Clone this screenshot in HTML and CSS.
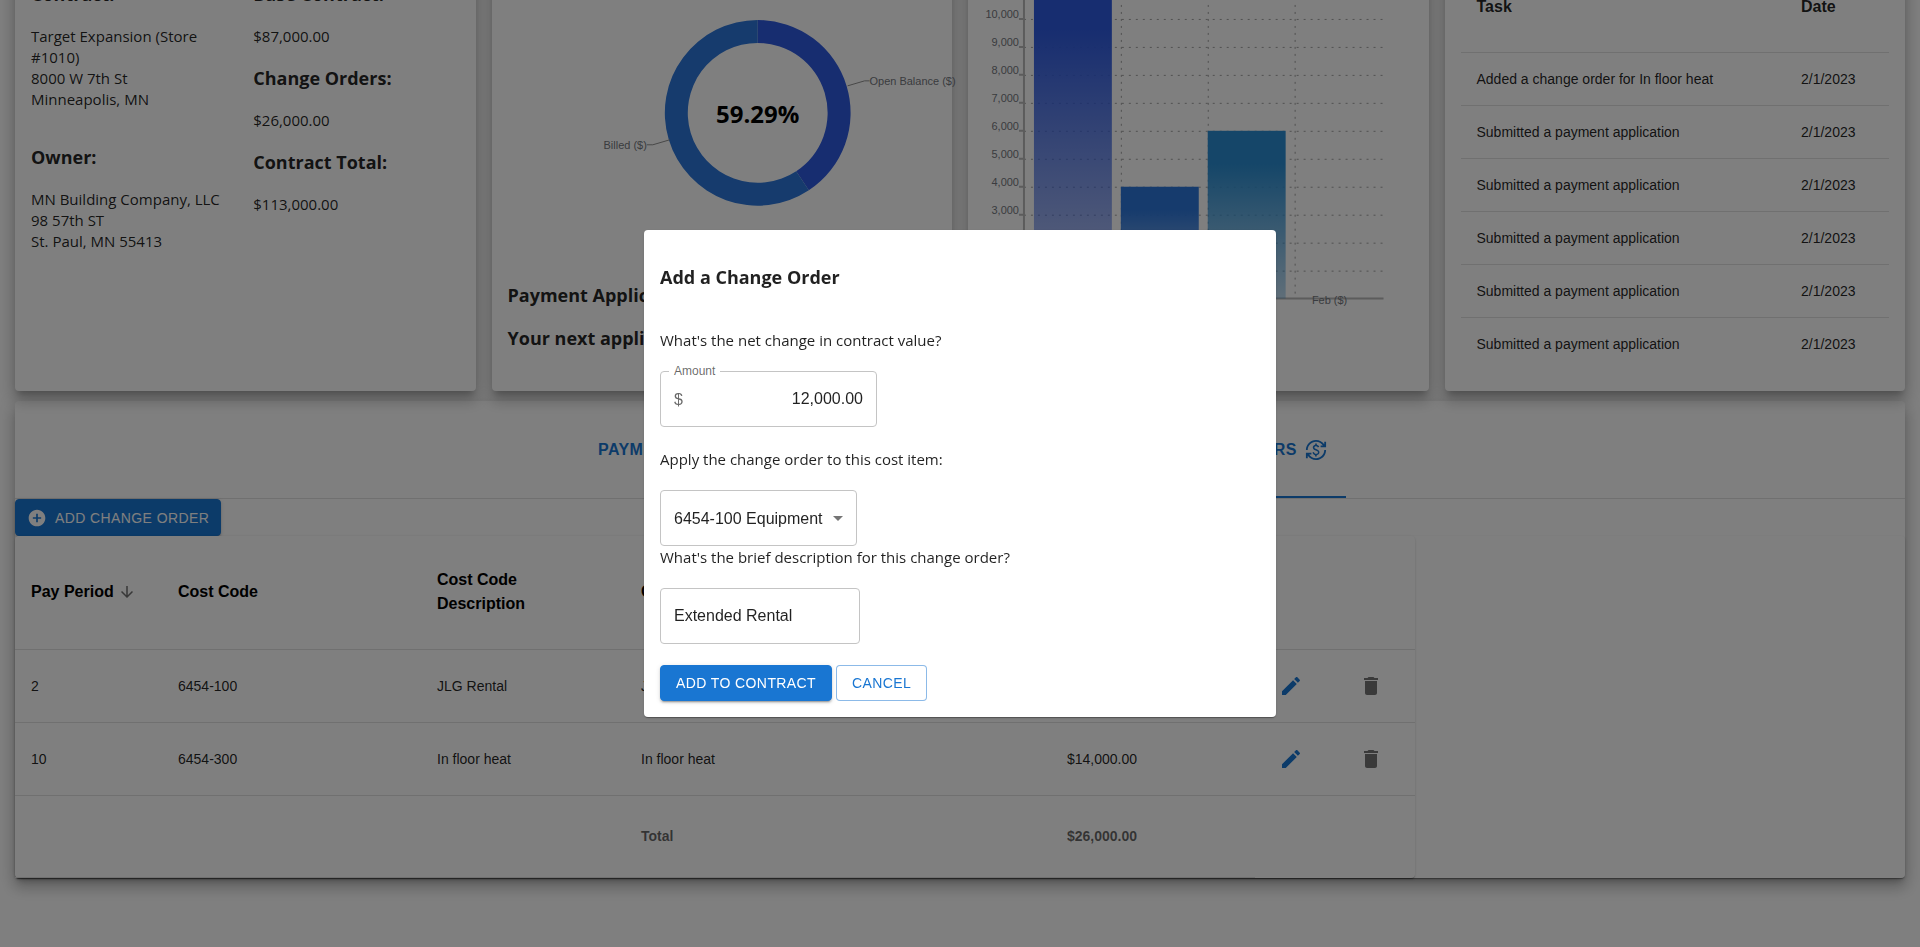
FILE: index.html
```html
<!DOCTYPE html>
<html lang="en">
<head>
<meta charset="utf-8">
<title>Contract Dashboard</title>
<link rel="stylesheet" href="styles.css">
</head>
<body>
<div class="viewport">
<main class="page">
  <section class="cards">
    <article class="card contract">
      <div class="contract-col">
        <h3>Contract:</h3>
        <p>Target Expansion (Store #1010)<br>8000 W 7th St<br>Minneapolis, MN</p>
        <h3 class="owner">Owner:</h3>
        <p>MN Building Company, LLC<br>98 57th ST<br>St. Paul, MN 55413</p>
      </div>
      <div class="contract-col">
        <h3>Base Contract:</h3>
        <p>$87,000.00</p>
        <h3>Change Orders:</h3>
        <p>$26,000.00</p>
        <h3>Contract Total:</h3>
        <p>$113,000.00</p>
      </div>
    </article>

    <article class="card billing">
      <svg class="chart" viewBox="0 0 429 303" role="img" aria-label="Billed share of contract">
        <path class="slice-open" d="M250 58A93 93 0 0 1 301.200 228.640L288.530 209.440A70 70 0 0 0 250 81Z"/>
        <path class="slice-billed" d="M301.200 228.640A93 93 0 1 1 250 58V81A70 70 0 1 0 288.530 209.440Z"/>
        <polyline class="leader" points="340,124 357,119 362,119"/>
        <polyline class="leader" points="162,178 145,183 139,183"/>
        <text class="chart-label" x="362" y="123">Open Balance ($)</text>
        <text class="chart-label end" x="139" y="187">Billed ($)</text>
        <text class="percent" x="250" y="161">59.29%</text>
      </svg>
      <h3>Payment Applications: 3</h3>
      <h3>Your next application is due soon</h3>
    </article>

    <article class="card">
      <svg class="chart" viewBox="0 0 429 370" role="img" aria-label="Billing by month">
        <defs>
          <linearGradient id="g1" x1="0" y1="0" x2="0" y2="1"><stop offset=".2" stop-color="#2f5be0"/><stop offset="1" stop-color="#2f5be0" stop-opacity=".3"/></linearGradient>
          <linearGradient id="g2" x1="0" y1="0" x2="0" y2="1"><stop offset=".2" stop-color="#2c76da"/><stop offset="1" stop-color="#2c76da" stop-opacity=".3"/></linearGradient>
          <linearGradient id="g3" x1="0" y1="0" x2="0" y2="1"><stop offset=".2" stop-color="#2b8dd2"/><stop offset="1" stop-color="#2b8dd2" stop-opacity=".3"/></linearGradient>
        </defs>
        <path class="grid" d="M40 57.500H400M40 85.500H400M40 113.500H400M40 141.500H400M40 169.500H400M40 197.500H400M40 225.500H400M40 253.500H400M40 281.500H400M40 309.500H400M137.500 1V333M224.500 1V333M311.500 1V333"/>
        <path class="axis" d="M40 0V337M39 337H400M35 57H40M35 85H40M35 113H40M35 141H40M35 169H40M35 197H40M35 225H40M35 253H40M35 281H40M35 309H40"/>
        <rect x="50" y="1" width="78" height="336" fill="url(#g1)"/>
        <rect x="137" y="225" width="78" height="112" fill="url(#g2)"/>
        <rect x="224" y="169" width="78" height="168" fill="url(#g3)"/>
        <g class="chart-label end">
          <text x="35" y="56">10,000</text><text x="35" y="84">9,000</text><text x="35" y="112">8,000</text>
          <text x="35" y="140">7,000</text><text x="35" y="168">6,000</text><text x="35" y="196">5,000</text>
          <text x="35" y="224">4,000</text><text x="35" y="252">3,000</text><text x="35" y="280">2,000</text>
          <text x="35" y="308">1,000</text>
        </g>
        <text class="chart-label middle" x="346" y="342">Feb ($)</text>
      </svg>
    </article>

    <article class="card">
      <table class="tasks">
        <thead><tr><th>Task</th><th class="date">Date</th></tr></thead>
        <tbody>
          <tr><td>Added a change order for In floor heat</td><td>2/1/2023</td></tr>
          <tr><td>Submitted a payment application</td><td>2/1/2023</td></tr>
          <tr><td>Submitted a payment application</td><td>2/1/2023</td></tr>
          <tr><td>Submitted a payment application</td><td>2/1/2023</td></tr>
          <tr><td>Submitted a payment application</td><td>2/1/2023</td></tr>
          <tr><td>Submitted a payment application</td><td>2/1/2023</td></tr>
        </tbody>
      </table>
    </article>
  </section>

  <section class="panel">
    <div class="tabs" role="tablist">
      <button class="tab" role="tab" type="button">Payment Applications</button>
      <button class="tab selected" role="tab" type="button" aria-selected="true">Change Orders
        <svg class="icon" viewBox="0 0 24 24"><path d="M12.89 11.1c-1.78-.59-2.64-.96-2.64-1.9 0-1.02 1.11-1.39 1.81-1.39 1.31 0 1.79.99 1.9 1.34l1.58-.67c-.15-.44-.82-1.91-2.66-2.23V5h-1.75v1.26c-2.6.56-2.62 2.85-2.62 2.96 0 2.27 2.25 2.91 3.35 3.31 1.58.56 2.28 1.07 2.28 2.03 0 1.13-1.05 1.61-1.98 1.61-1.82 0-2.34-1.87-2.4-2.09l-1.66.67c.63 2.19 2.28 2.78 2.9 2.96V19h1.75v-1.24c.52-.09 3.02-.59 3.02-3.22.01-1.39-.6-2.61-3-3.44zM3 21H1v-6h6v2H4.520c1.610 2.410 4.360 4 7.480 4 4.970 0 9-4.030 9-9h2c0 6.080-4.920 11-11 11-3.720 0-7.010-1.850-9-4.670V21zM1 12C1 5.920 5.920 1 12 1c3.720 0 7.010 1.850 9 4.670V3h2v6h-6V7h2.480C17.870 4.590 15.120 3 12 3c-4.970 0-9 4.030-9 9H1z"/></svg>
      </button>
    </div>
    <button class="btn contained add" type="button">
      <svg class="icon" viewBox="0 0 24 24"><path d="M12 2C6.48 2 2 6.48 2 12s4.480 10 10 10 10-4.480 10-10S17.520 2 12 2zm5 11h-4v4h-2v-4H7v-2h4V7h2v4h4v2z"/></svg>
      Add Change Order
    </button>
    <div class="table-area">
      <div class="table-paper">
        <table class="orders">
          <colgroup><col class="c-period"><col class="c-code"><col class="c-desc"><col class="c-order"><col class="c-desc"><col class="c-icon"><col class="c-icon"></colgroup>
          <thead>
            <tr>
              <th><button class="sort" type="button">Pay Period <svg class="icon" viewBox="0 0 24 24"><path d="M20 12l-1.410-1.410L13 16.170V4h-2v12.170l-5.580-5.590L4 12l8 8 8-8z"/></svg></button></th>
              <th>Cost Code</th><th>Cost Code<br>Description</th><th>Change Order Description</th><th>Amount</th><th></th><th></th>
            </tr>
          </thead>
          <tbody>
            <tr>
              <td>2</td><td>6454-100</td><td>JLG Rental</td><td>JLG Rental</td><td>$12,000.00</td>
              <td><button class="icon-btn edit" type="button" aria-label="Edit"><svg class="icon" viewBox="0 0 24 24"><path d="M3 17.250V21h3.750L17.810 9.940l-3.750-3.750L3 17.250zM20.710 7.040c.39-.39.39-1.020 0-1.410l-2.340-2.340c-.39-.39-1.020-.39-1.410 0l-1.830 1.830 3.750 3.750 1.830-1.830z"/></svg></button></td>
              <td><button class="icon-btn" type="button" aria-label="Delete"><svg class="icon" viewBox="0 0 24 24"><path d="M6 19c0 1.100.9 2 2 2h8c1.100 0 2-.9 2-2V7H6v12zM19 4h-3.500l-1-1h-5l-1 1H5v2h14V4z"/></svg></button></td>
            </tr>
            <tr>
              <td>10</td><td>6454-300</td><td>In floor heat</td><td>In floor heat</td><td>$14,000.00</td>
              <td><button class="icon-btn edit" type="button" aria-label="Edit"><svg class="icon" viewBox="0 0 24 24"><path d="M3 17.250V21h3.750L17.810 9.940l-3.750-3.750L3 17.250zM20.710 7.040c.39-.39.39-1.020 0-1.410l-2.340-2.340c-.39-.39-1.020-.39-1.410 0l-1.830 1.830 3.750 3.750 1.830-1.830z"/></svg></button></td>
              <td><button class="icon-btn" type="button" aria-label="Delete"><svg class="icon" viewBox="0 0 24 24"><path d="M6 19c0 1.100.9 2 2 2h8c1.100 0 2-.9 2-2V7H6v12zM19 4h-3.500l-1-1h-5l-1 1H5v2h14V4z"/></svg></button></td>
            </tr>
          </tbody>
          <tfoot>
            <tr><td></td><td></td><td></td><td>Total</td><td>$26,000.00</td></tr>
          </tfoot>
        </table>
      </div>
    </div>
  </section>
</main>
</div>

<div class="backdrop">
  <form class="dialog" role="dialog" aria-labelledby="dialog-title">
    <h3 id="dialog-title">Add a Change Order</h3>
    <p class="question first">What's the net change in contract value?</p>
    <fieldset class="amount">
      <legend><label for="amount">Amount</label></legend>
      <span class="currency">$</span>
      <input id="amount" type="text" value="12,000.00">
    </fieldset>
    <label class="question" for="cost-item">Apply the change order to this cost item:</label>
    <div class="select-wrap">
      <select id="cost-item"><option>6454-100 Equipment</option></select>
      <svg class="icon caret" viewBox="0 0 24 24"><path d="M7 10l5 5 5-5z"/></svg>
    </div>
    <label class="question tight" for="description">What's the brief description for this change order?</label>
    <input class="field" id="description" type="text" value="Extended Rental">
    <div class="actions">
      <button class="btn contained" type="submit">Add to Contract</button>
      <button class="btn outlined" type="button">Cancel</button>
    </div>
  </form>
</div>
</body>
</html>
```

FILE: styles.css
```css
* { box-sizing: border-box; }

body {
  margin: 0;
  background: #fff;
  color: rgba(0, 0, 0, .87);
  font: 15px/21px "Open Sans", "Noto Sans", sans-serif;
}

h3, p { margin: 0; }
h3 { font-size: 18px; line-height: 25px; font-weight: 700; }

button, input, select, table, .chart-label {
  font-family: "Liberation Sans", Arial, sans-serif;
}
button { cursor: pointer; }

.icon { width: 24px; height: 24px; fill: currentColor; flex: none; }

.viewport { height: 100vh; overflow: hidden; display: flow-root; }

/* The dashboard is shown scrolled down a little */
.page { margin: -54px 15px 0; }

.cards {
  position: relative;
  z-index: 1;
  display: grid;
  grid-template-columns: repeat(4, minmax(0, 1fr));
  gap: 16px;
}
.card {
  min-height: 445px;
  padding: 16px;
  border-radius: 4px;
  background: #fff;
}
.card, .panel {
  box-shadow: 0 6px 6px -3px rgba(0, 0, 0, .2), 0 10px 14px 1px rgba(0, 0, 0, .14), 0 4px 18px 3px rgba(0, 0, 0, .12);
}

.contract { display: grid; grid-template-columns: 1fr 1fr; gap: 16px; }
.contract-col { display: flex; flex-direction: column; gap: 19px; padding-top: 20px; }
.owner { margin-top: 16px; }

.billing { display: flex; flex-direction: column; gap: 18px; }

.chart { display: block; width: 100%; overflow: visible; }
.slice-open { fill: #2f5be0; }
.slice-billed { fill: #2c76da; }
.leader { fill: none; stroke: #909090; }
.chart-label { font-size: 11px; fill: #757880; }
.end { text-anchor: end; }
.middle { text-anchor: middle; }
.percent { font-size: 24px; font-weight: 700; text-anchor: middle; fill: #000; }
.grid { fill: none; stroke: #a0a0a0; stroke-dasharray: 2 5; }
.axis { fill: none; stroke: #b8b8b8; stroke-width: 2; }

table { width: 100%; border-collapse: collapse; font-size: 14px; line-height: 20px; }
th, td { padding: 16px; text-align: left; border-bottom: 1px solid #e0e0e0; }
th { font-size: 16px; line-height: 24px; }
.tasks th { height: 90px; }
.tasks .date { width: 104px; }
.tasks tbody tr:last-child td { border-bottom: 0; }

.panel { margin-top: 10px; border-radius: 4px; background: #fff; }

.tabs { display: flex; justify-content: center; border-bottom: 1px solid #e0e0e0; }
.tab {
  display: flex;
  align-items: center;
  gap: 8px;
  height: 97px;
  min-width: 386px;
  padding: 0 19px 0 24px;
  border: 0;
  background: none;
  color: #1976d2;
  font-size: 16px;
  font-weight: 700;
  letter-spacing: .02857em;
  text-transform: uppercase;
}
.tab.selected { justify-content: flex-end; box-shadow: inset 0 -2px #1976d2; }
.tab .icon { width: 22px; height: 22px; }

.btn {
  display: inline-flex;
  align-items: center;
  gap: 8px;
  height: 36px;
  padding: 0 15px;
  border: 1px solid #1976d2;
  border-radius: 4px;
  font-size: 14px;
  letter-spacing: .02857em;
  text-transform: uppercase;
}
.contained {
  background: #1976d2;
  color: #fff;
  box-shadow: 0 3px 1px -2px rgba(0, 0, 0, .2), 0 2px 2px rgba(0, 0, 0, .14), 0 1px 5px rgba(0, 0, 0, .12);
}
.outlined { background: #fff; border-color: rgba(25, 118, 210, .5); color: #1976d2; }
.add { display: flex; height: 37px; padding: 0 11px; }
.add .icon { width: 20px; height: 20px; }

.table-area, .table-paper {
  border-radius: 4px;
  background: #fff;
  box-shadow: 0 2px 1px -1px rgba(0, 0, 0, .2), 0 1px 1px rgba(0, 0, 0, .14), 0 1px 3px rgba(0, 0, 0, .12);
}
.table-paper { max-width: 1400px; }

.orders { table-layout: fixed; }
.c-period { width: 147px; }
.c-code { width: 259px; }
.c-desc { width: 204px; }
.c-icon { width: 80px; }
.orders th { height: 113px; color: #000; }
.orders tbody td { height: 73px; padding: 0 16px; }
.orders tfoot td { height: 82px; color: rgba(0, 0, 0, .6); font-weight: 700; }
.sort {
  display: flex;
  align-items: center;
  gap: 4px;
  padding: 0;
  border: 0;
  background: none;
  color: #000;
  font-size: 16px;
  font-weight: 700;
  white-space: nowrap;
}
.sort .icon { width: 18px; height: 18px; color: #707070; }
.icon-btn { display: flex; padding: 8px; border: 0; background: none; color: #757575; }
.edit { color: #1976d2; }

.backdrop {
  position: fixed;
  inset: 0;
  z-index: 10;
  display: flex;
  align-items: center;
  justify-content: center;
  background: rgba(0, 0, 0, .5);
}
.dialog {
  display: flex;
  flex-direction: column;
  align-items: flex-start;
  width: 632px;
  max-width: 100%;
  padding: 16px;
  border-radius: 4px;
  background: #fff;
  box-shadow: 0 2px 1px -1px rgba(0, 0, 0, .2), 0 1px 1px rgba(0, 0, 0, .14), 0 1px 3px rgba(0, 0, 0, .12);
}
.dialog h3 { margin-top: 19px; }
.question { margin: 22px 0 20px; }
.first { margin-top: 40px; }
.tight { margin-top: 1px; }

.amount {
  position: relative;
  display: flex;
  align-items: center;
  width: 217px;
  min-width: 0;
  height: 56px;
  margin: 0;
  padding: 0 13px;
  border: 1px solid #c4c4c4;
  border-radius: 4px;
  color: rgba(0, 0, 0, .6);
  font-family: "Liberation Sans", Arial, sans-serif;
  font-size: 16px;
}
.amount legend {
  position: absolute;
  top: -11px;
  left: 8px;
  padding: 0 5px;
  background: #fff;
  font-size: 12px;
}
.amount input { flex: 1; width: 0; min-width: 0; padding: 0; border: 0; text-align: right; }
.amount input, .field, select { height: 54px; background: none; color: rgba(0, 0, 0, .87); font-size: 16px; }
.field, select {
  height: 56px;
  padding: 0 13px;
  border: 1px solid #c4c4c4;
  border-radius: 4px;
}
.field { width: 200px; }
.select-wrap { position: relative; width: 197px; }
select { width: 100%; appearance: none; }
.caret { position: absolute; top: 16px; right: 7px; color: #757575; pointer-events: none; }
.actions { display: flex; gap: 4px; margin-top: 21px; }
```
